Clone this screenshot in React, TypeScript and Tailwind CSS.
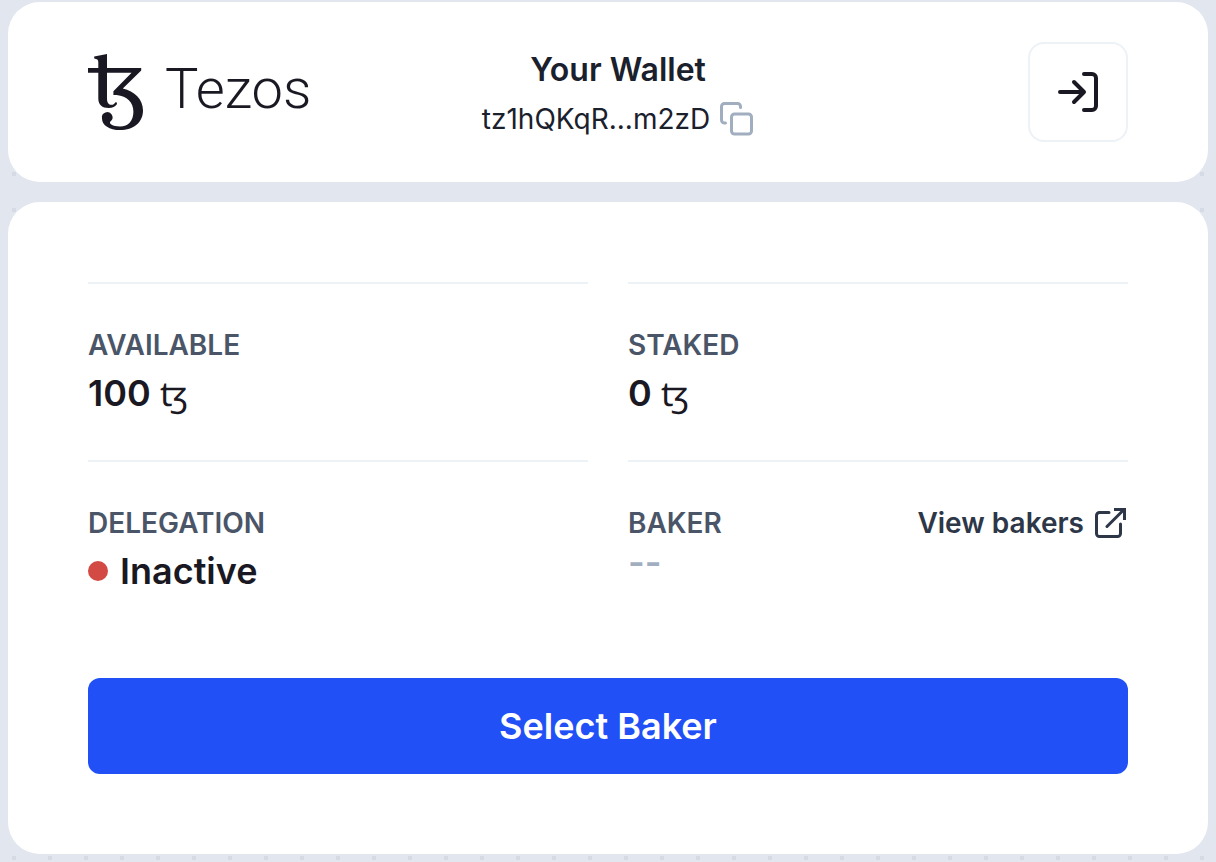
import type { ReactNode } from "react";

function TezosLogo() {
  return (
    <div className="flex items-center gap-[21px] text-[#1a1923]">
      <svg width="56" height="78" viewBox="0 0 56 78" fill="currentColor" aria-hidden="true">
        <path d="M6.2 3.4 19 1V15H53.2V17.4L34.8 35.6C46.5 38.2 55 46.400 55 57.5C55 69.500 45.5 77 32 77C21.500 77 14 72.2 14 65.4A5.3 5.3 0 1 1 22.4 68.6C20.6 70.6 24.5 73.6 32 73.6C40.5 73.6 45.4 67.5 45.4 58.5C45.4 49 39 43 28.700 41.9H25.4V38.3L43.6 19.7H19V45.5C19 49.5 20.500 51.8 23.5 51.8C25.5 51.8 26.600 50.6 27.4 49.2L28.9 49.6V51.2C27.4 53.6 24.500 55 20.8 55C14 55 10.3 51.7 10.3 45.5V19.7H0V15H10.3V9C10.3 6.6 9 6.3 6.2 5.6Z" />
      </svg>
      <span className="pb-1.5 font-['Roboto'] text-[56px] leading-[64px] font-light">Tezos</span>
    </div>
  );
}

function CopyIcon() {
  return (
    <svg width="34" height="34" viewBox="0 0 34 34" fill="none" stroke="#a0aec0" strokeWidth="3" strokeLinecap="round" strokeLinejoin="round" aria-hidden="true">
      <rect x="11.5" y="12" width="20" height="20" rx="3" />
      <path d="M5.5 21H4.5a3 3 0 0 1-3-3V4.5a3 3 0 0 1 3-3H17.5a3 3 0 0 1 3 3V5.5" />
    </svg>
  );
}

function LogoutIcon() {
  return (
    <svg width="40" height="40" viewBox="0 0 40 40" fill="none" stroke="#1a1923" strokeWidth="4" strokeLinecap="round" strokeLinejoin="round" aria-hidden="true">
      <path d="M2 20H26M16 10L26 20L16 30" />
      <path d="M26 2H34a4 4 0 0 1 4 4V34a4 4 0 0 1-4 4H26" />
    </svg>
  );
}

function ExternalIcon() {
  return (
    <svg width="34" height="34" viewBox="0 0 34 34" fill="none" stroke="currentColor" strokeWidth="3" strokeLinecap="round" aria-hidden="true">
      <path d="M15 6.5H5.5a3 3 0 0 0-3 3V27.5a3 3 0 0 0 3 3H23.5a3 3 0 0 0 3-3V18" />
      <path d="M13 20.5L30 3.5" />
      <path d="M20 3.5H30.5V14" strokeLinecap="butt" />
    </svg>
  );
}

interface StatProps {
  label: string;
  action?: ReactNode;
  children: ReactNode;
}

function Stat({ label, action, children }: StatProps) {
  return (
    <div className="border-t-2 border-[#edf2f7] py-10">
      <div className="flex items-center justify-between text-[28px] leading-[42px]">
        <h2 className="font-semibold text-[#4a5568] uppercase">{label}</h2>
        {action}
      </div>
      {children}
    </div>
  );
}

function Amount({ value }: { value: number }) {
  return (
    <p className="text-[36px] leading-[54px] font-semibold text-[#1a1923]">
      {value} <span className="text-[34px] leading-none font-normal">ꜩ</span>
    </p>
  );
}

export default function App() {
  return (
    <div className="min-h-screen space-y-5 bg-[#e2e6ef] bg-[conic-gradient(from_270deg_at_4px_4px,#d6dae5_90deg,transparent_0)] bg-[size:36px_36px] bg-[position:12px_28px] px-2 pt-0.5 pb-2 font-['Inter',sans-serif]">
      <header className="grid grid-cols-[1fr_auto_1fr] items-center rounded-[32px] bg-white px-20 py-10">
        <TezosLogo />

        <div className="flex flex-col items-center gap-1 pt-0.5 pl-5 text-[#1a202c]">
          <h1 className="text-[32px] leading-[48px] font-semibold">Your Wallet</h1>
          <div className="flex items-center gap-2.5 text-[28px] leading-[42px]">
            <span>tz1hQKqR...m2zD</span>
            <button type="button" aria-label="Copy address" className="cursor-pointer">
              <CopyIcon />
            </button>
          </div>
        </div>

        <button
          type="button"
          aria-label="Disconnect"
          className="flex size-[100px] cursor-pointer items-center justify-center justify-self-end rounded-2xl border-2 border-[#edf2f7]"
        >
          <LogoutIcon />
        </button>
      </header>

      <main className="rounded-[32px] bg-white p-20">
        <div className="grid grid-cols-2 gap-x-10">
          <Stat label="Available">
            <Amount value={100} />
          </Stat>

          <Stat label="Staked">
            <Amount value={0} />
          </Stat>

          <Stat label="Delegation">
            <p className="flex items-center gap-3 text-[36px] leading-[54px] font-semibold text-[#1a1923]">
              <span className="size-5 rounded-full bg-[#d34a45]" />
              Inactive
            </p>
          </Stat>

          <Stat
            label="Baker"
            action={
              <a href="#bakers" className="flex items-center gap-2.5 font-semibold text-[#2d3748]">
                View bakers
                <ExternalIcon />
              </a>
            }
          >
            <p className="text-[36px] leading-[36px] font-semibold text-[#a0aec0]">--</p>
          </Stat>
        </div>

        <button
          type="button"
          className="mt-10 h-24 w-full cursor-pointer rounded-xl bg-[#2050f6] text-[36px] font-semibold text-white"
        >
          Select Baker
        </button>
      </main>
    </div>
  );
}
